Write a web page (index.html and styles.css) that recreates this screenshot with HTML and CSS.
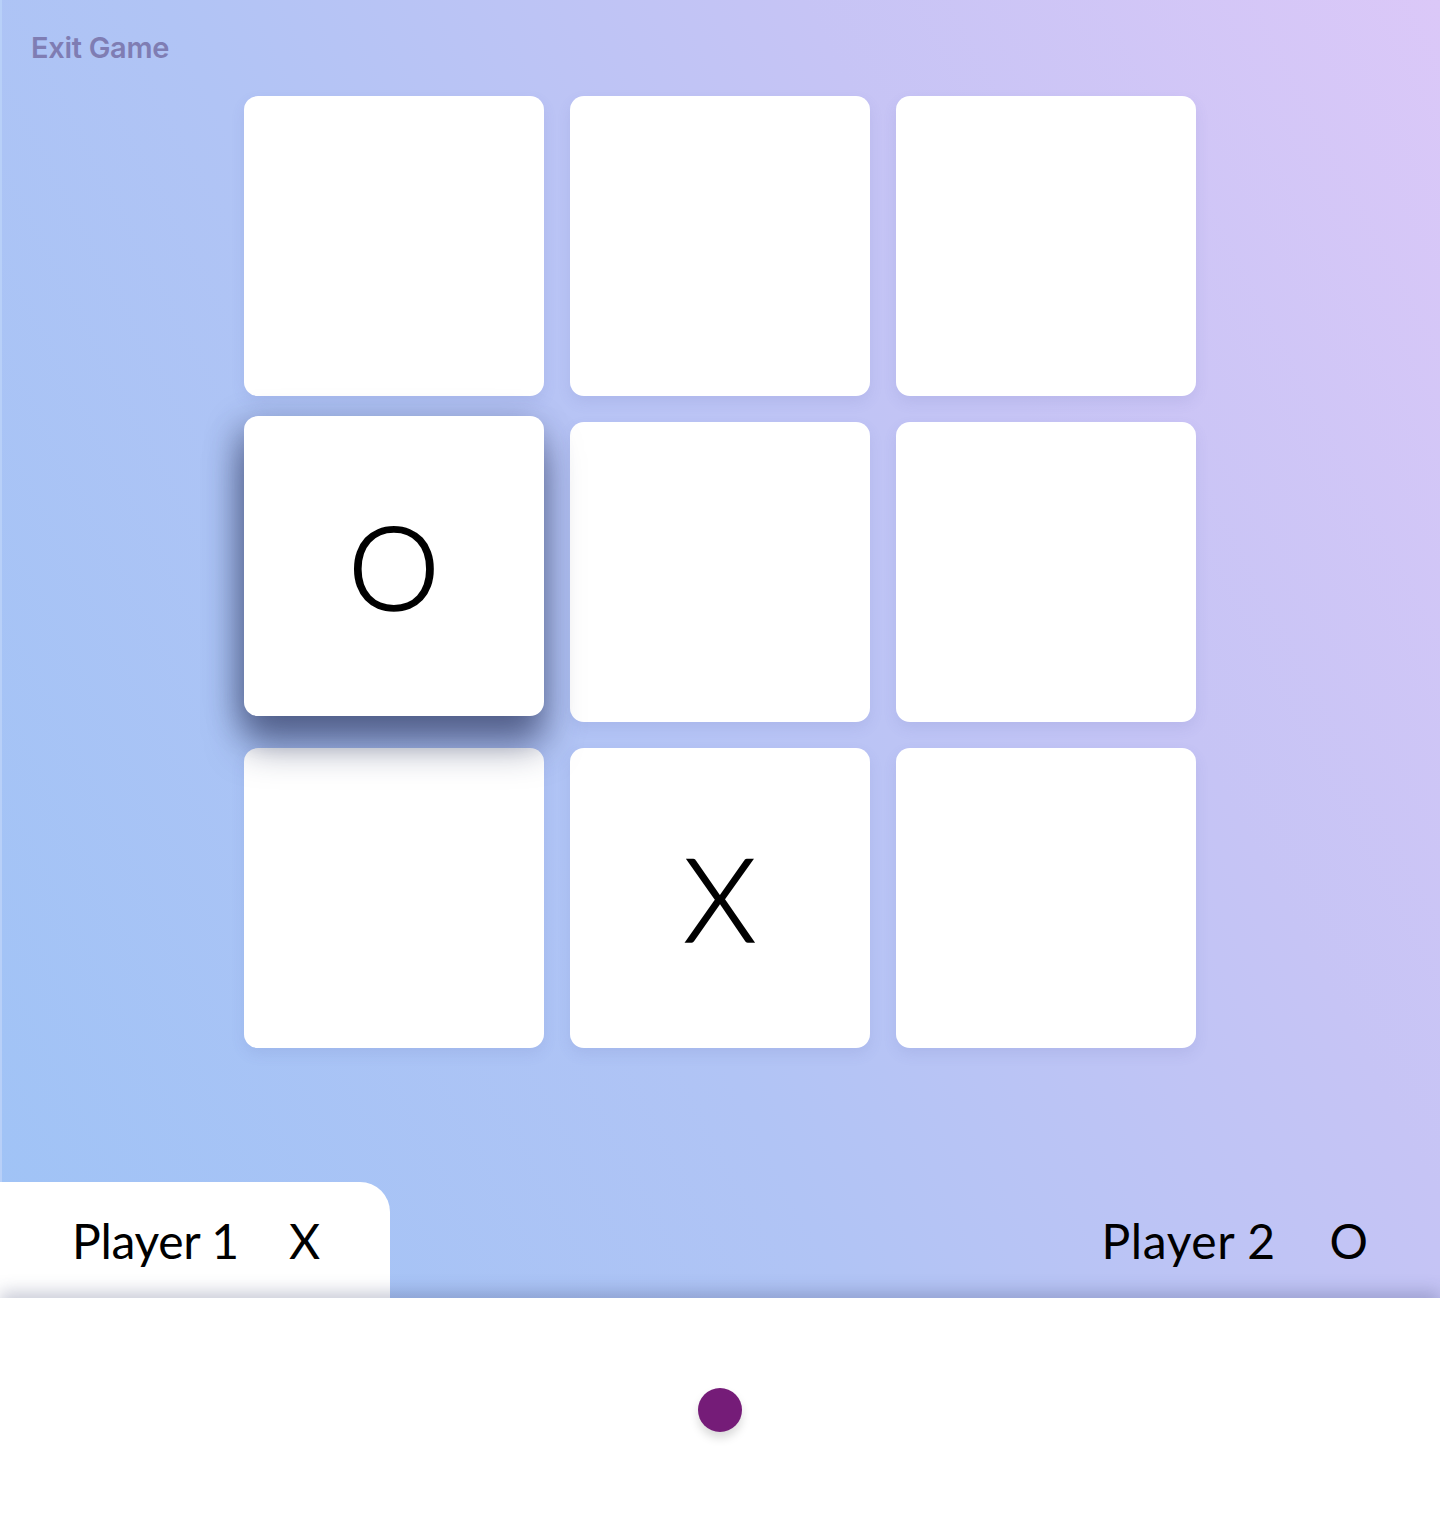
FILE: index.html
```html
<!DOCTYPE html>
<html lang="en">
<head>
<meta charset="utf-8">
<title>Tic Tac Toe</title>
<link rel="stylesheet" href="styles.css">
</head>
<body>
<div class="app">
  <section class="stage">
    <a class="exit" href="#">Exit Game</a>
    <div class="board">
      <div class="cell"></div>
      <div class="cell"></div>
      <div class="cell"></div>
      <div class="cell cell-active">O</div>
      <div class="cell"></div>
      <div class="cell"></div>
      <div class="cell"></div>
      <div class="cell">X</div>
      <div class="cell"></div>
    </div>
    <div class="players">
      <div class="player player-current"><span class="player-name">Player 1</span><span class="player-mark">X</span></div>
      <div class="player player-other"><span class="player-name">Player 2</span><span class="player-mark">O</span></div>
    </div>
  </section>
  <section class="footer">
    <span class="dot"></span>
  </section>
</div>
</body>
</html>
```
FILE: styles.css
```css
* { box-sizing: border-box; }
html, body { margin: 0; padding: 0; }
body {
  width: 1440px;
  height: 1528px;
  overflow: hidden;
  font-family: "Lato", "Noto Sans", sans-serif;
  background: #fff;
}
.app { display: flex; flex-direction: column; height: 1528px; }
.stage {
  height: 1298px;
  display: flex;
  flex-direction: column;
  background: linear-gradient(62deg, #9fc3f6 0%, #b1c4f5 40%, #c6c4f5 70%, #dbc8f8 100%);
  box-shadow: inset 2px 0 0 #b8d0f8;
}
.exit {
  display: block;
  margin: 30px 0 0 31px;
  height: 36px;
  line-height: 36px;
  font-family: "Inter", "Roboto", sans-serif;
  font-weight: 600;
  font-size: 29px;
  letter-spacing: -0.3px;
  color: #7f7db3;
  text-decoration: none;
}
.board {
  margin: 30px auto 0;
  display: grid;
  grid-template-columns: repeat(3, 300px);
  grid-template-rows: repeat(3, 300px);
  gap: 26px;
}
.cell {
  background: #fff;
  border-radius: 14px;
  display: flex;
  align-items: center;
  justify-content: center;
  font-family: "Lato", sans-serif;
  font-weight: 300;
  font-size: 116px;
  line-height: 1;
  color: #000;
  -webkit-text-stroke: 1.6px #000;
  box-shadow: 0 6px 14px rgba(90, 100, 170, 0.12);
}
.cell-active {
  position: relative;
  z-index: 2;
  transform: translateY(-6px);
  box-shadow: 0 30px 36px rgba(40, 50, 90, 0.55), -6px 8px 32px rgba(40, 50, 90, 0.4);
}
.players {
  margin-top: auto;
  height: 116px;
  display: flex;
  justify-content: space-between;
  align-items: stretch;
}
.player {
  display: flex;
  align-items: center;
  font-size: 48px;
  font-weight: 400;
  color: #000;
}
.player-current {
  width: 390px;
  background: #fff;
  border-top-right-radius: 30px;
  padding-left: 72px;
}
.player-other { padding-right: 72px; }
.player-name { width: 217px; letter-spacing: -0.3px; }
.player-other .player-name { width: 228px; letter-spacing: 0.6px; }
.footer {
  position: relative;
  z-index: 3;
  flex: 1;
  background: #fff;
  display: flex;
  align-items: center;
  justify-content: center;
  box-shadow: 0 -6px 16px rgba(60, 70, 110, 0.28);
}
.dot {
  width: 44px;
  height: 44px;
  border-radius: 50%;
  background: #751c78;
  box-shadow: 0 6px 10px rgba(0, 0, 0, 0.15);
  margin-top: -6px;
}
```
